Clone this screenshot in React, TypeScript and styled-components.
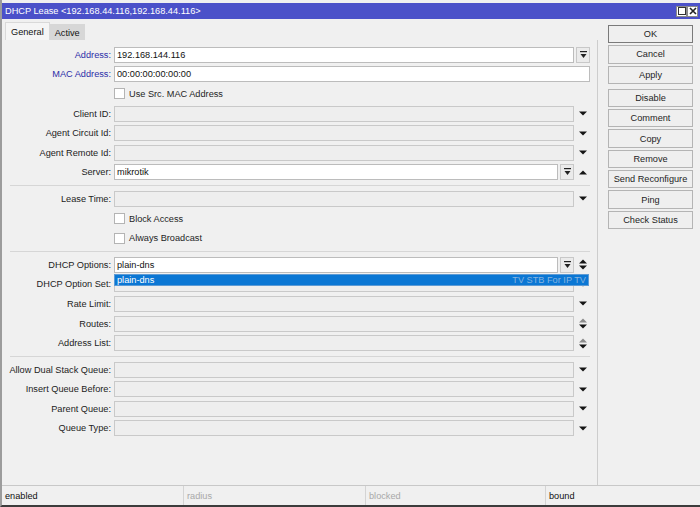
import * as React from 'react';
import styled, { createGlobalStyle } from 'styled-components';

const GlobalStyle = createGlobalStyle`
  html, body {
    margin: 0;
    padding: 0;
    background: #f0f0f0;
  }
  body {
    font-family: 'Liberation Sans', Arial, sans-serif;
    font-size: 9.2px;
    color: #1e1e1e;
  }
`;

type Trail = 'down' | 'up' | 'updown' | 'updownDim';

interface FieldRow {
  label: string;
  value?: string;
  white?: boolean;
  accent?: boolean;
  pick?: boolean;
  trail?: Trail;
}

const BarDown = () => (
  <svg width="7" height="8" viewBox="0 0 7 8">
    <rect x="0" y="0" width="7" height="1.2" fill="#222" />
    <polygon points="0.5,3 6.5,3 3.5,7" fill="#222" />
  </svg>
);

const Tri = ({ up, dim }: { up?: boolean; dim?: boolean }) => (
  <svg width="8" height="5" viewBox="0 0 8 5">
    <polygon points={up ? '0,4.5 8,4.5 4,0.5' : '0,0.5 8,0.5 4,4.5'} fill={dim ? '#8c8c8c' : '#151515'} />
  </svg>
);

const TrailIcon = ({ kind }: { kind: Trail }) => {
  if (kind === 'down') return <Tri />;
  if (kind === 'up') return <Tri up />;
  return (
    <S.Stack>
      <Tri up dim={kind === 'updownDim'} />
      <Tri />
    </S.Stack>
  );
};

const FormRow = ({ row }: { row: FieldRow }) => (
  <S.Row>
    <S.Label $accent={row.accent}>{row.label}</S.Label>
    <S.Field $white={row.white}>{row.value}</S.Field>
    {row.pick && (
      <S.PickButton>
        <BarDown />
      </S.PickButton>
    )}
    {row.trail && (
      <S.Arrow>
        <TrailIcon kind={row.trail} />
      </S.Arrow>
    )}
  </S.Row>
);

const Check = ({ label }: { label: string }) => (
  <S.CheckRow>
    <S.Box />
    <span>{label}</span>
  </S.CheckRow>
);

const buttons = ['OK', 'Cancel', 'Apply', 'Disable', 'Comment', 'Copy', 'Remove', 'Send Reconfigure', 'Ping', 'Check Status'];

const App: React.FC = () => {
  return (
    <>
      <GlobalStyle />
      <S.Window>
        <S.TitleBar>
          <span>DHCP Lease &lt;192.168.44.116,192.168.44.116&gt;</span>
          <S.Controls>
            <S.Ctl>
              <svg width="8" height="8" viewBox="0 0 8 8">
                <rect x="0.5" y="0.5" width="7" height="7" fill="none" stroke="#333" />
              </svg>
            </S.Ctl>
            <S.Ctl>
              <svg width="8" height="8" viewBox="0 0 8 8">
                <path d="M1 1 L7 7 M7 1 L1 7" stroke="#222" strokeWidth="1.6" />
              </svg>
            </S.Ctl>
          </S.Controls>
        </S.TitleBar>

        <S.Body>
          <S.Main>
            <S.Tabs>
              <S.Tab $active>General</S.Tab>
              <S.Tab>Active</S.Tab>
            </S.Tabs>
            <S.Panel>
              <FormRow row={{ label: 'Address:', value: '192.168.144.116', white: true, accent: true, pick: true }} />
              <FormRow row={{ label: 'MAC Address:', value: '00:00:00:00:00:00', white: true, accent: true }} />
              <Check label="Use Src. MAC Address" />
              <FormRow row={{ label: 'Client ID:', trail: 'down' }} />
              <FormRow row={{ label: 'Agent Circuit Id:', trail: 'down' }} />
              <FormRow row={{ label: 'Agent Remote Id:', trail: 'down' }} />
              <FormRow row={{ label: 'Server:', value: 'mikrotik', white: true, pick: true, trail: 'up' }} />
              <S.Separator />
              <FormRow row={{ label: 'Lease Time:', trail: 'down' }} />
              <Check label="Block Access" />
              <Check label="Always Broadcast" />
              <S.Separator />
              <S.Row>
                <S.Label>DHCP Options:</S.Label>
                <S.Field $white>plain-dns</S.Field>
                <S.PickButton>
                  <BarDown />
                </S.PickButton>
                <S.Arrow>
                  <TrailIcon kind="updown" />
                </S.Arrow>
                <S.Popup>
                  <span>plain-dns</span>
                  <S.PopupHint>TV STB For IP TV</S.PopupHint>
                </S.Popup>
              </S.Row>
              <FormRow row={{ label: 'DHCP Option Set:', trail: 'down' }} />
              <FormRow row={{ label: 'Rate Limit:', trail: 'down' }} />
              <FormRow row={{ label: 'Routes:', trail: 'updownDim' }} />
              <FormRow row={{ label: 'Address List:', trail: 'updownDim' }} />
              <S.Separator />
              <FormRow row={{ label: 'Allow Dual Stack Queue:', trail: 'down' }} />
              <FormRow row={{ label: 'Insert Queue Before:', trail: 'down' }} />
              <FormRow row={{ label: 'Parent Queue:', trail: 'down' }} />
              <FormRow row={{ label: 'Queue Type:', trail: 'down' }} />
            </S.Panel>
          </S.Main>

          <S.Side>
            {buttons.map(b => (
              <S.Button key={b} $default={b === 'OK'} $gapAfter={b === 'Apply'}>
                {b}
              </S.Button>
            ))}
          </S.Side>
        </S.Body>

        <S.StatusBar>
          <S.Cell>enabled</S.Cell>
          <S.Cell $dim>radius</S.Cell>
          <S.Cell $dim>blocked</S.Cell>
          <S.Cell>bound</S.Cell>
        </S.StatusBar>
      </S.Window>
    </>
  );
};

const S = {
  Window: styled.div`
    box-sizing: border-box;
    width: 700px;
    height: 507px;
    padding-top: 3px;
    border-left: 2px solid #9c9c9c;
    border-bottom: 2px solid #3c3c3c;
    display: flex;
    flex-direction: column;
    background: #f0f0f0;
  `,
  TitleBar: styled.div`
    height: 16px;
    flex: none;
    background: #4b51c9;
    color: #fff;
    font-size: 9.2px;
    display: flex;
    align-items: center;
    justify-content: space-between;
    padding-left: 3px;
    padding-right: 2px;
  `,
  Controls: styled.div`
    display: flex;
  `,
  Ctl: styled.div`
    width: 11px;
    height: 11px;
    box-sizing: border-box;
    background: #fff;
    border: 1px solid #8a8a8a;
    display: flex;
    align-items: center;
    justify-content: center;
  `,
  Body: styled.div`
    flex: 1;
    display: flex;
    min-height: 0;
  `,
  Main: styled.div`
    width: 596px;
    flex: none;
    display: flex;
    flex-direction: column;
  `,
  Tabs: styled.div`
    display: flex;
    align-items: flex-end;
    height: 18px;
    margin-top: 3px;
    padding-left: 3px;
  `,
  Tab: styled.div<{ $active?: boolean }>`
    box-sizing: border-box;
    height: ${p => (p.$active ? '18px' : '16px')};
    padding: 0 ${p => (p.$active ? '5px' : '4px')};
    display: flex;
    align-items: center;
    background: ${p => (p.$active ? '#f5f5f5' : '#d7d7d7')};
    border: 1px solid ${p => (p.$active ? '#d9d9d9' : '#d7d7d7')};
    border-bottom: none;
    color: #111;
  `,
  Panel: styled.div`
    flex: 1;
    padding: 5px 7px 0 0;
    border-right: 1px solid #cdcdcd;
  `,
  Row: styled.div`
    position: relative;
    display: flex;
    align-items: center;
    height: 19.6px;
  `,
  Label: styled.span<{ $accent?: boolean }>`
    width: 109px;
    flex: none;
    text-align: right;
    white-space: nowrap;
    color: ${p => (p.$accent ? '#2c2ea8' : '#222')};
  `,
  Field: styled.div<{ $white?: boolean }>`
    flex: 1;
    margin-left: 3px;
    height: 16px;
    box-sizing: border-box;
    padding: 0 2px;
    display: flex;
    align-items: center;
    background: ${p => (p.$white ? '#fff' : '#eeeeee')};
    border: 1px solid ${p => (p.$white ? '#bcbcbc' : '#c9c9c9')};
    color: #111;
  `,
  PickButton: styled.div`
    width: 14px;
    height: 16px;
    flex: none;
    margin-left: 2px;
    box-sizing: border-box;
    border: 1px solid #c8c8c8;
    background: #ebebeb;
    display: flex;
    align-items: center;
    justify-content: center;
  `,
  Arrow: styled.div`
    width: 16px;
    flex: none;
    display: flex;
    justify-content: center;
    padding-left: 1px;
    box-sizing: border-box;
  `,
  Stack: styled.div`
    display: flex;
    flex-direction: column;
    gap: 1px;
  `,
  Popup: styled.div`
    position: absolute;
    left: 112px;
    right: 1px;
    top: calc(100% - 1px);
    height: 12px;
    box-sizing: border-box;
    background: #0b77d4;
    border: 1px solid #5d9bd5;
    color: #fff;
    display: flex;
    align-items: center;
    justify-content: space-between;
    padding: 0 2px;
    z-index: 2;
  `,
  PopupHint: styled.span`
    color: #86b3df;
  `,
  CheckRow: styled.div`
    display: flex;
    align-items: center;
    gap: 4px;
    height: 19.6px;
    padding-left: 112px;
    color: #1e1e1e;
  `,
  Box: styled.div`
    width: 11px;
    height: 11px;
    box-sizing: border-box;
    border: 1px solid #b4b4b4;
    background: #fff;
  `,
  Separator: styled.div`
    height: 1px;
    background: #d6d6d6;
    margin: 3px 0 3px 8px;
  `,
  Side: styled.div`
    flex: 1;
    display: flex;
    flex-direction: column;
    gap: 2px;
    padding: 6px 7px 0 10px;
  `,
  Button: styled.div<{ $default?: boolean; $gapAfter?: boolean }>`
    height: 18.3px;
    box-sizing: border-box;
    display: flex;
    align-items: center;
    justify-content: center;
    background: #efefef;
    border: 1px solid ${p => (p.$default ? '#7a7a7a' : '#b4b4b4')};
    color: #1e1e1e;
    margin-bottom: ${p => (p.$gapAfter ? '3px' : '0')};
  `,
  StatusBar: styled.div`
    height: 20px;
    flex: none;
    box-sizing: border-box;
    border-top: 1px solid #c8c8c8;
    display: grid;
    grid-template-columns: 181px 182px 180px 1fr;
  `,
  Cell: styled.div<{ $dim?: boolean }>`
    display: flex;
    align-items: center;
    padding-left: 3px;
    border-left: 1px solid #d4d4d4;
    color: ${p => (p.$dim ? '#a8a8a8' : '#111')};
    &:first-child {
      border-left: none;
    }
  `,
};

export default App;
